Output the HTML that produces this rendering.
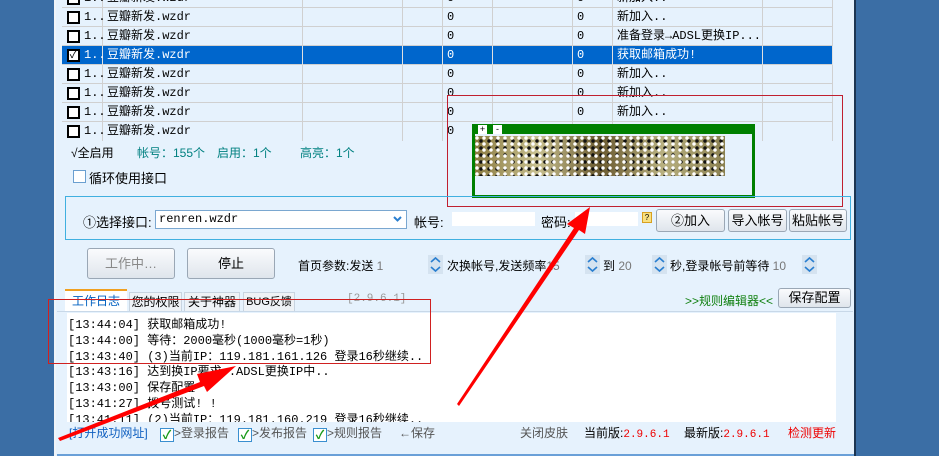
<!DOCTYPE html>
<html><head><meta charset="utf-8"><style>
*{margin:0;padding:0;box-sizing:border-box}
body{width:939px;height:456px;overflow:hidden;background:#e6f2fd;position:relative;font-family:"Liberation Sans","Noto Sans CJK SC","WenQuanYi Zen Hei",sans-serif;font-size:12px;color:#000}
.a{position:absolute;white-space:nowrap}
.row{position:absolute;left:62px;width:771px;height:19px;border-bottom:1px solid #d0d0d0}
.row.sel{background:#0066cc;color:#fff}
.c{position:absolute;top:0;height:19px;line-height:18px;border-right:1px solid #d0d0d0;padding-left:4px;font-family:"Liberation Mono","Noto Sans CJK SC",monospace;font-size:12px}
.sel .c{border-right-color:#e0e0e0}
.cb{position:absolute;left:5px;top:3px;width:13px;height:13px;border:2px solid #000;background:#fff}
.btn{position:absolute;border:1px solid #9aa7b5;border-radius:3px;background:linear-gradient(#fafbfd,#dfe5ec);text-align:center;font-size:13px}
.spin{position:absolute;width:15px;height:19px;background:#d5e3f0}
.log{position:absolute;left:68px;font-family:"Liberation Mono","Noto Sans CJK SC",monospace;font-size:12px}
.chk{display:inline-block;width:14px;height:14px;border:1px solid #3a8fd0;background:#fff;color:#1a9a1a;font-size:12px;line-height:12px;text-align:center;vertical-align:-2px;font-weight:bold}
</style></head><body>
<div class="a" style="left:0;top:0;width:56px;height:456px;background:#3b6ea5;border-right:2px solid #f0f4f8"></div>
<div class="a" style="left:854px;top:0;width:85px;height:456px;background:#3b6ea5;border-left:2px solid #1c3552"></div>

<div class="row" style="top:-11px"><div class="cb"></div><div class="c" style="left:18px;width:23px">1..</div><div class="c" style="left:41px;width:200px">豆瓣新发.wzdr</div><div class="c" style="left:241px;width:100px"></div><div class="c" style="left:341px;width:40px"></div><div class="c" style="left:381px;width:50px">0</div><div class="c" style="left:431px;width:80px"></div><div class="c" style="left:511px;width:40px">0</div><div class="c" style="left:551px;width:150px">新加入..</div><div class="c" style="left:701px;width:70px"></div></div>
<div class="row" style="top:8px"><div class="cb"></div><div class="c" style="left:18px;width:23px">1..</div><div class="c" style="left:41px;width:200px">豆瓣新发.wzdr</div><div class="c" style="left:241px;width:100px"></div><div class="c" style="left:341px;width:40px"></div><div class="c" style="left:381px;width:50px">0</div><div class="c" style="left:431px;width:80px"></div><div class="c" style="left:511px;width:40px">0</div><div class="c" style="left:551px;width:150px">新加入..</div><div class="c" style="left:701px;width:70px"></div></div>
<div class="row" style="top:27px"><div class="cb"></div><div class="c" style="left:18px;width:23px">1..</div><div class="c" style="left:41px;width:200px">豆瓣新发.wzdr</div><div class="c" style="left:241px;width:100px"></div><div class="c" style="left:341px;width:40px"></div><div class="c" style="left:381px;width:50px">0</div><div class="c" style="left:431px;width:80px"></div><div class="c" style="left:511px;width:40px">0</div><div class="c" style="left:551px;width:150px">准备登录→ADSL更换IP...</div><div class="c" style="left:701px;width:70px"></div></div>
<div class="row sel" style="top:46px"><div class="cb" style="line-height:9px;font-size:11px;color:#000;text-align:center">✓</div><div class="c" style="left:18px;width:23px">1..</div><div class="c" style="left:41px;width:200px">豆瓣新发.wzdr</div><div class="c" style="left:241px;width:100px"></div><div class="c" style="left:341px;width:40px"></div><div class="c" style="left:381px;width:50px">0</div><div class="c" style="left:431px;width:80px"></div><div class="c" style="left:511px;width:40px">0</div><div class="c" style="left:551px;width:150px">获取邮箱成功!</div><div class="c" style="left:701px;width:70px"></div></div>
<div class="row" style="top:65px"><div class="cb"></div><div class="c" style="left:18px;width:23px">1..</div><div class="c" style="left:41px;width:200px">豆瓣新发.wzdr</div><div class="c" style="left:241px;width:100px"></div><div class="c" style="left:341px;width:40px"></div><div class="c" style="left:381px;width:50px">0</div><div class="c" style="left:431px;width:80px"></div><div class="c" style="left:511px;width:40px">0</div><div class="c" style="left:551px;width:150px">新加入..</div><div class="c" style="left:701px;width:70px"></div></div>
<div class="row" style="top:84px"><div class="cb"></div><div class="c" style="left:18px;width:23px">1..</div><div class="c" style="left:41px;width:200px">豆瓣新发.wzdr</div><div class="c" style="left:241px;width:100px"></div><div class="c" style="left:341px;width:40px"></div><div class="c" style="left:381px;width:50px">0</div><div class="c" style="left:431px;width:80px"></div><div class="c" style="left:511px;width:40px">0</div><div class="c" style="left:551px;width:150px">新加入..</div><div class="c" style="left:701px;width:70px"></div></div>
<div class="row" style="top:103px"><div class="cb"></div><div class="c" style="left:18px;width:23px">1..</div><div class="c" style="left:41px;width:200px">豆瓣新发.wzdr</div><div class="c" style="left:241px;width:100px"></div><div class="c" style="left:341px;width:40px"></div><div class="c" style="left:381px;width:50px">0</div><div class="c" style="left:431px;width:80px"></div><div class="c" style="left:511px;width:40px">0</div><div class="c" style="left:551px;width:150px">新加入..</div><div class="c" style="left:701px;width:70px"></div></div>
<div class="row" style="top:122px;border-bottom:none"><div class="cb"></div><div class="c" style="left:18px;width:23px">1..</div><div class="c" style="left:41px;width:200px">豆瓣新发.wzdr</div><div class="c" style="left:241px;width:100px"></div><div class="c" style="left:341px;width:40px"></div><div class="c" style="left:381px;width:50px">0</div><div class="c" style="left:431px;width:80px"></div><div class="c" style="left:511px;width:40px">0</div><div class="c" style="left:551px;width:150px"></div><div class="c" style="left:701px;width:70px"></div></div>

<div class="a" style="left:71px;top:144px;font-size:12px">√全启用</div>
<div class="a" style="left:137px;top:144px;color:#008080">帐号：155个</div>
<div class="a" style="left:217px;top:144px;color:#008080">启用：1个</div>
<div class="a" style="left:300px;top:144px;color:#008080">高亮：1个</div>
<div class="a" style="left:73px;top:170px;width:13px;height:13px;border:1px solid #6a9fd0;background:#fff"></div>
<div class="a" style="left:89px;top:168px;font-size:13px">循环使用接口</div>

<div class="a" style="left:472px;top:124px;width:283px;height:74px;border:3px solid #008000;border-top:10px solid #008000;background:#e6f2fd"></div>
<div class="a" style="left:478px;top:125px;width:9px;height:9px;background:#fff;font-size:9px;line-height:8px;text-align:center">+</div>
<div class="a" style="left:493px;top:125px;width:9px;height:9px;background:#fff;font-size:9px;line-height:8px;text-align:center">-</div>
<div class="a" style="left:475px;top:136px;width:250px;height:40px;background:radial-gradient(circle at 2px 2px,#fff 1.5px,transparent 2px) 0 0/7px 6px,radial-gradient(circle at 3px 3px,#111 1.5px,transparent 2px) 3px 2px/8px 7px,linear-gradient(90deg,#8a7a40,#c8c090,#6a5a30,#b8b080,#8a8050)"></div>
<div class="a" style="left:447px;top:95px;width:396px;height:112px;border:1px solid #c02030"></div>

<div class="a" style="left:65px;top:196px;width:786px;height:44px;border:1px solid #40b0e0"></div>
<div class="a" style="left:83px;top:212px;font-size:13px">①选择接口:</div>
<div class="a" style="left:155px;top:210px;width:252px;height:19px;border:1px solid #7aa7d0;background:#fff;font-family:'Liberation Mono',monospace;font-size:12px;line-height:17px;padding-left:3px">renren.wzdr<svg style="position:absolute;right:4px;top:5px" width="9" height="6"><path d="M1 1 L4.5 4.5 L8 1" stroke="#2a7fd0" stroke-width="2" fill="none"/></svg></div>
<div class="a" style="left:414px;top:212px;font-size:13px">帐号:</div>
<div class="a" style="left:452px;top:212px;width:83px;height:14px;background:#fff"></div>
<div class="a" style="left:541px;top:212px;font-size:13px">密码:</div>
<div class="a" style="left:575px;top:212px;width:63px;height:14px;background:#fff"></div>
<div class="a" style="left:642px;top:212px;width:10px;height:11px;border:1px solid #d8a020;background:#f8e080;font-size:8px;line-height:9px;text-align:center">?</div>
<div class="btn" style="left:656px;top:209px;width:69px;height:23px;line-height:21px">②加入</div>
<div class="btn" style="left:728px;top:209px;width:59px;height:23px;line-height:21px">导入帐号</div>
<div class="btn" style="left:789px;top:209px;width:58px;height:23px;line-height:21px">粘贴帐号</div>

<div class="btn" style="left:87px;top:248px;width:88px;height:31px;line-height:29px;color:#888">工作中…</div>
<div class="btn" style="left:187px;top:248px;width:88px;height:31px;line-height:29px">停止</div>
<div class="a" style="left:298px;top:257px;font-size:12px">首页参数:发送 <span style="color:#777">1</span></div>
<svg class="spin" style="left:428px;top:255px" width="15" height="19"><path d="M3 7 L7.5 3 L12 7 M3 12 L7.5 16 L12 12" stroke="#2a7fd0" stroke-width="1.6" fill="none"/></svg>
<div class="a" style="left:447px;top:257px">次换帐号,发送频率<span style="color:#777">15</span></div>
<svg class="spin" style="left:585px;top:255px" width="15" height="19"><path d="M3 7 L7.5 3 L12 7 M3 12 L7.5 16 L12 12" stroke="#2a7fd0" stroke-width="1.6" fill="none"/></svg>
<div class="a" style="left:603px;top:257px">到 <span style="color:#777">20</span></div>
<svg class="spin" style="left:652px;top:255px" width="15" height="19"><path d="M3 7 L7.5 3 L12 7 M3 12 L7.5 16 L12 12" stroke="#2a7fd0" stroke-width="1.6" fill="none"/></svg>
<div class="a" style="left:670px;top:257px">秒,登录帐号前等待 <span style="color:#777">10</span></div>
<svg class="spin" style="left:802px;top:255px" width="15" height="19"><path d="M3 7 L7.5 3 L12 7 M3 12 L7.5 16 L12 12" stroke="#2a7fd0" stroke-width="1.6" fill="none"/></svg>

<div class="a" style="left:65px;top:289px;width:62px;height:23px;background:#fff;border-top:2px solid #f0a020;color:#0060c0;font-size:12px;line-height:20px;text-align:center">工作日志</div>
<div class="a" style="left:129px;top:292px;width:53px;height:20px;background:#eef2f6;border:1px solid #c8d4e0;font-size:12px;line-height:18px;text-align:center">您的权限</div>
<div class="a" style="left:184px;top:292px;width:56px;height:20px;background:#eef2f6;border:1px solid #c8d4e0;font-size:12px;line-height:18px;text-align:center">关于神器</div>
<div class="a" style="left:243px;top:292px;width:52px;height:20px;background:#eef2f6;border:1px solid #c8d4e0;font-size:11px;line-height:18px;text-align:center">BUG反馈</div>
<div class="a" style="left:347px;top:293px;color:#999;font-family:'Liberation Mono',monospace;font-size:11px">[2.9.6.1]</div>
<div class="a" style="left:685px;top:292px;color:#108010;font-size:12px">&gt;&gt;规则编辑器&lt;&lt;</div>
<div class="btn" style="left:778px;top:288px;width:73px;height:20px;line-height:18px">保存配置</div>
<div class="a" style="left:57px;top:311px;width:796px;height:1px;background:#c8d8e8"></div>

<div class="a" style="left:67px;top:313px;width:769px;height:109px;background:#fff"></div>
<div class="log" style="top:315px">[13:44:04] 获取邮箱成功!</div>
<div class="log" style="top:331px">[13:44:00] 等待：2000毫秒(1000毫秒=1秒)</div>
<div class="log" style="top:347px">[13:43:40] (3)当前IP：119.181.161.126 登录16秒继续..</div>
<div class="log" style="top:362px">[13:43:16] 达到换IP要求..ADSL更换IP中..</div>
<div class="log" style="top:378px">[13:43:00] 保存配置</div>
<div class="log" style="top:394px">[13:41:27] 拨号测试! !</div>
<div class="log" style="top:410px;height:12px;overflow:hidden">[13:41:11] (2)当前IP：119.181.160.219 登录16秒继续..</div>
<div class="a" style="left:48px;top:299px;width:383px;height:65px;border:1px solid #d02020"></div>

<div class="a" style="left:69px;top:424px;color:#1060c0;font-size:12px">[打开成功网址]</div>
<div class="a" style="left:160px;top:424px;color:#555"><span class="chk">✓</span>&gt;登录报告</div>
<div class="a" style="left:238px;top:424px;color:#555"><span class="chk">✓</span>&gt;发布报告</div>
<div class="a" style="left:313px;top:424px;color:#555"><span class="chk">✓</span>&gt;规则报告</div>
<div class="a" style="left:399px;top:424px;color:#555">←保存</div>
<div class="a" style="left:520px;top:424px;color:#555">关闭皮肤</div>
<div class="a" style="left:584px;top:424px">当前版:<span style="color:#e00;font-family:'Liberation Mono',monospace;font-size:11px">2.9.6.1</span></div>
<div class="a" style="left:684px;top:424px">最新版:<span style="color:#e00;font-family:'Liberation Mono',monospace;font-size:11px">2.9.6.1</span></div>
<div class="a" style="left:788px;top:424px;color:#e00">检测更新</div>
<div class="a" style="left:57px;top:454px;width:797px;height:2px;background:#6aa0d8"></div>

<svg class="a" style="left:0;top:0" width="939" height="456">
<polygon points="58,438 200,382 197,374 236,366 207,392 204,386 60,441" fill="#ff0000"/>
<polygon points="457,404 574,228 567,224 590,207 585,234 579,230 459,406" fill="#ff0000"/>
</svg>
</body></html>
